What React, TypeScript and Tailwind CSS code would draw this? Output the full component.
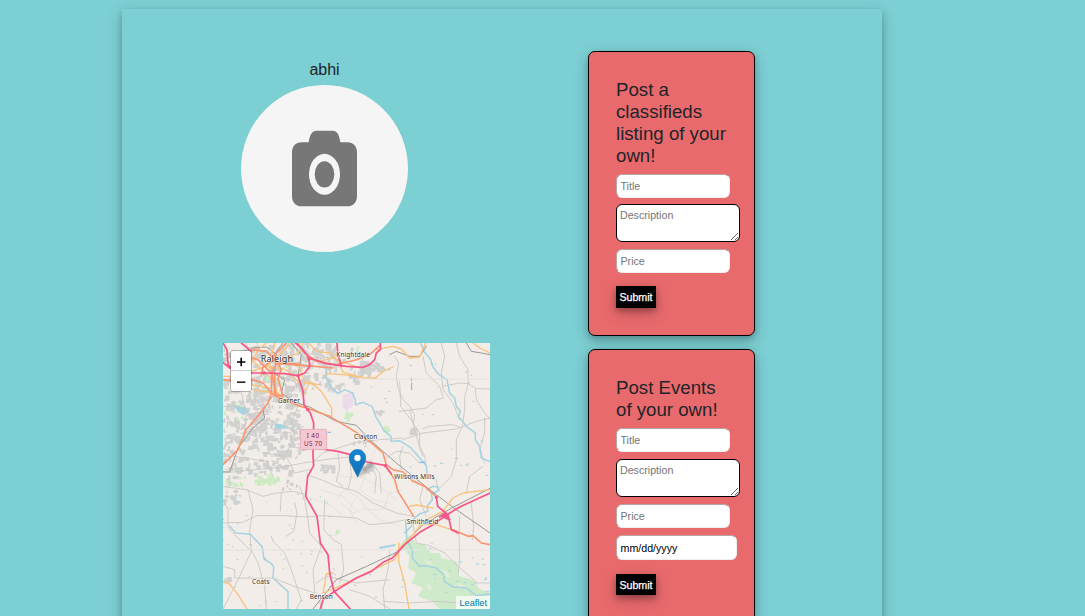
import React from "react";

// Map geometry is expressed in an 801x798 grid, three units per CSS pixel.

function seeded(seed: number) {
  let s = seed;
  return () => {
    s = (s * 16807) % 2147483647;
    return s / 2147483647;
  };
}

type Area = [x: number, y: number, w: number, h: number, count: number, size: number];

const urbanAreas: Area[] = [
  [0, 0, 110, 120, 50, 16],
  [85, 0, 170, 150, 120, 16],
  [230, 0, 110, 75, 50, 14],
  [230, 70, 85, 70, 20, 11],
  [0, 130, 130, 160, 110, 13],
  [85, 150, 145, 100, 75, 13],
  [75, 230, 165, 110, 85, 14],
  [0, 270, 80, 110, 50, 14],
  [90, 330, 110, 60, 32, 12],
  [0, 370, 45, 110, 20, 11],
  [165, 390, 60, 60, 10, 9],
  [290, 363, 45, 20, 18, 11],
  [415, 358, 30, 34, 14, 10],
  [410, 50, 62, 34, 32, 15],
  [375, 85, 30, 26, 12, 13],
  [340, 10, 80, 60, 10, 10],
  [455, 198, 18, 12, 9, 12],
  [560, 252, 18, 16, 9, 10],
  [380, 290, 60, 45, 10, 9],
  [5, 700, 15, 12, 8, 9],
  [310, 105, 45, 35, 14, 12],
];

function blobs(areas: Area[], seed: number) {
  const r = seeded(seed);
  let d = "";
  for (const [x, y, w, h, n, size] of areas) {
    for (let i = 0; i < n; i++) {
      const bx = x + r() * w;
      const by = y + r() * h;
      const bw = 4 + r() * size;
      const bh = 4 + r() * size;
      const k = (r() - 0.5) * 8;
      d += `M${bx.toFixed(0)} ${by.toFixed(0)}l${bw.toFixed(0)} ${k.toFixed(0)}l${(-k).toFixed(0)} ${bh.toFixed(0)}l${(-bw).toFixed(0)} ${(k / 2).toFixed(0)}z`;
    }
  }
  return d;
}

function dashes(areas: Area[], seed: number) {
  const r = seeded(seed);
  let d = "";
  for (const [x, y, w, h, n, size] of areas) {
    for (let i = 0; i < n; i++) {
      d += `M${(x + r() * w).toFixed(0)} ${(y + r() * h).toFixed(0)}h${(1 + r() * size).toFixed(0)}`;
    }
  }
  return d;
}

const urban = blobs(urbanAreas, 71);
const parks = blobs(
  [
    [90, 60, 240, 80, 14, 10],
    [0, 170, 70, 60, 8, 9],
    [0, 400, 70, 25, 12, 10],
    [95, 395, 65, 25, 28, 12],
    [365, 205, 16, 22, 12, 10],
    [480, 245, 18, 20, 6, 9],
    [395, 10, 30, 15, 3, 8],
    [335, 560, 10, 8, 3, 7],
  ],
  29,
);
const ponds = dashes(
  [
    [0, 450, 330, 340, 50, 2],
    [350, 60, 450, 340, 26, 4],
    [300, 640, 240, 150, 12, 4],
    [580, 600, 210, 150, 20, 7],
    [560, 340, 230, 70, 8, 10],
  ],
  17,
);

const minorRoads = [
  "M0 385L20 388L100 380L180 372L240 360L320 348L400 340",
  "M0 540L60 538L100 518L180 518L250 522L300 518L400 525L440 545L500 540L550 530",
  "M0 470L15 500L15 555L60 600L90 630L105 660L125 730L130 798",
  "M75 440L90 500L80 560L85 625L50 700L35 730L0 798",
  "M0 670L35 680L35 705L100 706L150 705L220 732L275 750",
  "M230 430L245 470L255 530L260 570L295 610L270 680L275 745L300 798",
  "M145 580L150 595L185 630L205 680L222 732L235 770L220 798",
  "M305 470L302 560L330 590L355 605L362 680L350 720",
  "M215 480L222 510L212 565L190 580",
  "M0 430L70 440L120 460L160 450L210 445L250 455",
  "M175 450L172 505M190 330L215 280L205 240L225 190",
  "M250 395L300 412L340 430L400 445L450 480L520 510L570 520",
  "M272 355L300 330L360 310L400 298L470 290L540 285",
  "M345 330L350 375L340 415L360 430",
  "M380 345L385 400L375 440M440 360L460 400L455 450",
  "M540 290L600 270L700 258L760 235L801 225",
  "M515 40L527 60L520 100L525 135L540 170L560 190L575 215L572 240",
  "M600 40L610 90L650 130L660 160M655 0L665 40L655 90L660 140L690 180L710 230",
  "M700 0L710 40L735 80L735 125L725 160L725 200L718 250L700 290L700 350L685 400L650 435",
  "M658 130L710 120L735 122L760 137L801 138M757 140L760 170L785 210L801 228",
  "M530 115L533 190L560 225L590 270L590 310L605 340L610 370",
  "M533 205L570 200L610 195L640 170L662 165",
  "M600 257L620 250L690 245L715 255",
  "M785 225L785 270L770 320L785 360M780 370L740 400L730 450",
  "M440 350L470 390L475 450M540 310L530 340L535 380",
  "M490 345L520 325L560 330L590 360",
  "M560 200L590 315L600 340",
  "M570 540L580 600L620 608L665 630L700 665L740 700L762 720L801 720",
  "M710 520L708 580L710 640L706 690",
  "M500 625L495 680L480 740L485 798",
  "M280 720L310 700L400 720L500 710",
  "M480 775L560 780L640 775L720 780M380 740L440 760L500 798",
  "M745 480L752 550L748 590",
  "M610 520L590 470L600 430L560 400M640 410L645 440",
  "M100 0L130 60L150 90L200 110L240 130M70 0L85 65M0 50L80 85M0 190L50 190L110 240M50 130L70 210L65 270",
  "M150 270L200 270L240 250M120 330L190 340L215 390L260 380M30 340L130 355L150 400",
];

const faintRoads = [
  "M340 470L365 440L410 465L430 500L480 500L500 450L540 440",
  "M370 350L430 390L410 440L450 470L500 480M250 460L330 490L360 520",
  "M350 475L390 510L430 495L470 530L530 550",
  "M355 400L420 405L470 430L520 470M400 540L380 500L395 470",
  "M430 380L450 345M290 440L360 460L400 500M460 320L440 340",
];

const rivers = [
  "M310 80L308 100L318 118L326 135L345 152L365 140L388 150L397 170V185L420 178L447 190L458 220L470 240L482 262L504 280V295L530 293L562 313L590 345L610 368L612 395",
  "M612 440L630 430L645 432L648 442L625 452L628 470L612 490L615 505L590 512L570 530L565 550L545 570",
  "M592 0L605 28L622 48L630 72L648 95L672 110L680 150L695 165L700 190L712 205L706 222L715 230L730 250L757 270L757 290L770 310L775 345L801 356",
  "M20 550L38 570L82 574L118 612L123 648L145 662L152 672L150 705L195 746V798",
  "M548 535L552 590L568 622L568 645L590 670L610 668L640 675L662 695L664 715L690 732L730 735L760 758L801 752",
];

const yellowRoads = [
  "M258 0L280 25L320 30L345 55L360 88L420 104L458 105L480 85L510 72",
  "M460 20L510 10L535 18L560 45L590 42L608 0",
  "M310 92L360 95L420 104",
  "M0 100L50 100L85 125L140 135",
  "M85 60L105 20L130 0M200 0L180 25L155 48M85 85L130 70L190 80L230 120",
  "M240 0L225 30L180 50M155 0L140 60L160 145L180 165",
  "M260 115L295 145L326 195V220M260 115L245 150M225 60L245 120L290 125",
  "M90 140L150 150L230 190L270 200M20 40L85 50L150 110",
  "M0 716L20 723L45 755L72 798",
  "M300 750L310 693L330 690M300 750L360 725L440 685L515 650L530 615L575 570L600 535L660 505L690 465L720 450L801 440",
  "M527 600L527 655L545 720L558 798",
  "M560 490L580 486L630 495M590 545L640 545L700 565",
  "M750 0L770 15L801 30M250 45L290 55L330 45L410 75",
];

const orangeRoads = [
  "M0 365L45 320L68 262L100 225L135 180L145 150L146 90L160 62L155 35L175 15L190 0",
  "M88 110L120 120L150 155L190 175L250 195L320 220L400 268L448 302L480 330L490 365L510 380L540 387L570 415L605 430L640 462",
  "M490 370L515 410L525 445L550 485L572 520",
  "M85 45L105 50L145 90L160 155L180 160L165 105L175 80L165 60M85 20L130 25L160 55L230 65M225 0L240 25L280 55L340 65L400 50L440 35L470 8",
  "M690 560L735 580L750 578L775 600L801 605",
  "M160 62L250 68L330 75M155 90V155M0 110L40 115L90 110M115 95L120 70L160 50",
];

const motorways = [
  "M218 0L240 20L258 45L260 70L245 90L225 98L185 92L120 90L60 90L20 75L0 58",
  "M225 98L240 145L243 185L262 210L272 240L270 340L272 368L254 400L248 460L282 520L292 600L315 635L320 690L333 745L382 798",
  "M258 45L310 62L370 70L420 73L440 65L455 50L460 30L472 20V0",
  "M342 0L344 30L355 70M0 0L12 20L15 65L30 80M55 0L85 25L65 60",
  "M295 318L345 325L380 334L432 357L485 367L505 392",
  "M292 798L300 770L330 748L400 705L445 685L480 658L508 645L545 605L590 568L630 545L665 520L710 492L801 450",
  "M640 462L644 490L675 515L685 560L705 570M650 522L665 512L680 530L655 520",
];

const railways = [
  "M270 798L340 710L420 675L520 628L600 545L690 493L801 436",
  "M210 175L260 192L340 235L400 247L440 290L520 360L620 440L690 493L801 570",
  "M0 387H20L45 315L90 255L125 225L120 200L148 160",
  "M730 0L745 25L775 30L801 35M500 35L520 25L560 40H590L610 10",
  "M150 90L185 110L175 150L210 175M85 15L130 12L155 30M180 0L160 25L155 90M205 0L235 35L225 100",
];

function Lines({ paths, className }: { paths: string[]; className: string }) {
  return (
    <g className={className}>
      {paths.map((d) => (
        <path key={d} d={d} />
      ))}
    </g>
  );
}

const places: { name: string; x: number; y: number; width: number; className: string }[] = [
  { name: "Raleigh", x: 113, y: 58, width: 97, className: "text-[27px]" },
  { name: "Knightdale", x: 340, y: 41, width: 101, className: "text-[19.5px]" },
  { name: "Garner", x: 165, y: 180, width: 66, className: "text-[19.5px]" },
  { name: "Clayton", x: 393, y: 288, width: 70, className: "text-[19.5px]" },
  { name: "Wilsons Mills", x: 514, y: 408, width: 121, className: "text-[19.5px]" },
  { name: "Smithfield", x: 551, y: 542, width: 95, className: "text-[19.5px]" },
  { name: "Coats", x: 87, y: 723, width: 53, className: "text-[19.5px]" },
  { name: "Benson", x: 260, y: 768, width: 69, className: "text-[19.5px]" },
];

function MapTiles() {
  return (
    <svg
      viewBox="0 0 801 798"
      className="block h-[266px] w-[267px] fill-none [stroke-linecap:round] [stroke-linejoin:round]"
    >
      <rect width="801" height="798" className="fill-[#f2ede8]" />
      <path d={urban} className="fill-[#d1d1d0]" />
      <path d={parks} className="fill-[#cdebc2]" />
      <path d="M360 155l35-8l-5 40l-20 18l-12-12z" className="fill-[#ecdcea]" />
      <path
        d="M545 590L560 575L578 600L605 605L625 630L650 630L655 645L700 655L710 700L750 710L770 738L801 750V798H650L625 775L585 760L600 735L565 720L580 690L555 675L560 640L545 620L520 625z"
        className="fill-[#cfeaca]"
      />
      <path d="M600 650l30 8l-10 12zM650 680l25 5l5 20l-20-8zM700 720l25 8l-15 10zM610 720l22 12l-15 14z" className="fill-[#e0ecd8]" />
      <path d="M28 185L50 192L65 190L80 208L60 217L45 205zM155 240L180 246L200 256L155 258zM468 612L520 602L515 610L470 618z" className="fill-[#a3d4e0]" />
      <Lines paths={faintRoads} className="stroke-[#dcdeda] stroke-[2]" />
      <Lines paths={minorRoads} className="stroke-[#c8c6c3] stroke-[2.6]" />
      <Lines paths={rivers} className="stroke-[#a6d3e1] stroke-[4.5]" />
      <path d={ponds} className="stroke-[#93cae6] stroke-[2.5]" />
      <path d="M565 105v8M566 120v20M315 268h8M590 358h15" className="stroke-[#6fb9e8] stroke-[3]" />
      <path d="M0 621H801M400 108H801" className="stroke-[#e2e1e0] stroke-[3]" />
      <Lines paths={railways} className="stroke-[#9b9893] stroke-[3]" />
      <Lines paths={yellowRoads} className="stroke-[#fac27b] stroke-[4]" />
      <Lines paths={orangeRoads} className="stroke-[#fb946f] stroke-[4.8]" />
      <Lines paths={motorways} className="stroke-[#f6578a] stroke-[5.2]" />
      <path
        d="M225 98h.1M258 48h.1M254 200h.1M487 368h.1M335 745h.1M663 518h.1M640 463h.1M123 90h.1"
        className="stroke-[#f6578a] stroke-[10]"
      />
      <rect x="232" y="259" width="79" height="61" rx="4" className="fill-[#f3c8d2] stroke-[#e0a0b0] stroke-[2]" />
      <g className="fill-[#8c1c4c] font-['Noto_Sans',sans-serif] text-[19px]">
        <text x="251" y="285" textLength="37">I 40</text>
        <text x="243" y="308" textLength="54">US 70</text>
      </g>
      <g className="fill-[#303030] stroke-white/60 stroke-[4] font-['Noto_Sans',sans-serif] [paint-order:stroke]">
        {places.map((p) => (
          <text key={p.name} x={p.x} y={p.y} textLength={p.width} className={p.className}>
            {p.name}
          </text>
        ))}
      </g>
      <defs>
        <linearGradient id="pin" x1="0" y1="0" x2="0" y2="1">
          <stop offset="0" stopColor="#1687d3" />
          <stop offset="1" stopColor="#126eb4" />
        </linearGradient>
      </defs>
      <path d="M404 401L421 372L440 358Q456 362 444 374L415 399z" className="fill-black/20 blur-[3px]" />
      <path
        d="M403.500 401L386 367Q379 357 379 344A24.500 24.500 0 0 1 428 344Q428 357 421 367z"
        fill="url(#pin)"
        className="stroke-[#1b6fae] stroke-[2]"
      />
      <circle cx="403.500" cy="345" r="9.500" className="fill-white" />
    </svg>
  );
}

function LocationMap() {
  return (
    <div className="relative h-[266px] w-[267px] overflow-hidden">
      <MapTiles />
      <div className="absolute left-[7px] top-[7px] flex w-[22px] flex-col rounded-[3px] border border-black/25 bg-clip-padding font-['Liberation_Sans',sans-serif] text-black">
        <button className="flex h-5 items-center justify-center rounded-t-[2px] border-b border-[#ccc] bg-white">
          <svg viewBox="0 0 20 20" className="size-5 stroke-black stroke-[1.6]">
            <path d="M6 11h8.400M10.200 6.800v8.400" />
          </svg>
        </button>
        <button className="flex h-5 items-center justify-center rounded-b-[2px] bg-white">
          <svg viewBox="0 0 20 20" className="size-5 stroke-[#222] stroke-[1.600]">
            <path d="M6 11.200h8.400" />
          </svg>
        </button>
      </div>
      <div className="absolute bottom-0 right-0 h-[13px] bg-white/70 px-[3px] font-['Liberation_Sans',sans-serif] text-[9.200px] leading-[14px] text-[#0078a8]">
        Leaflet
      </div>
    </div>
  );
}

function Avatar() {
  return (
    <div className="size-[167px] overflow-hidden rounded-full bg-[#f5f5f5]">
      <svg viewBox="33 105 501 501" className="block size-full">
        <path
          d="M214 277H236C239 255 246 242 260 242H308C322 242 328 255 331 277H353C370 277 381 290 381 307V438C381 456 370 469 353 469H214C197 469 186 456 186 438V307C186 290 197 277 214 277Z"
          className="fill-[#777]"
        />
        <ellipse cx="283.500" cy="373" rx="46.500" ry="61.500" className="fill-[#f5f5f5]" />
        <ellipse cx="283.500" cy="373" rx="29.500" ry="39.500" className="fill-[#777]" />
      </svg>
    </div>
  );
}

function Field({ placeholder }: { placeholder: string }) {
  return (
    <input
      placeholder={placeholder}
      className="block h-6 w-[114px] rounded-[6px] border border-[#b5a5a5] border-b-[#eee] border-r-[#eee] bg-white px-[3.500px] pb-px text-[10.670px] placeholder:text-[#757575]"
    />
  );
}

function Description({ className }: { className: string }) {
  return (
    <textarea
      placeholder="Description"
      className={`${className} block h-[38px] w-[124px] resize rounded-[6px] border border-black bg-white px-[3px] pt-[4px] text-[10.670px] leading-[13px] placeholder:text-[#757575]`}
    />
  );
}

function Submit({ className }: { className: string }) {
  return (
    <button
      className={`${className} block w-10 bg-black text-center text-[10.670px] text-white shadow-[0_3px_6px_rgba(0,0,0,0.25),0_5px_15px_rgba(0,0,0,0.22)] [-webkit-text-stroke:0.25px_white]`}
    >
      Submit
    </button>
  );
}

function PostCard({ title, children }: { title: React.ReactNode; children: React.ReactNode }) {
  return (
    <section className="w-[167px] rounded-[7px] border border-black bg-[#e96a6d] pb-[27px] pl-[27px] pt-[27px] shadow-[0_3px_6px_rgba(0,0,0,0.2),0_5px_15px_rgba(0,0,0,0.19)]">
      <h2 className="mb-[7px] text-[18.670px] leading-[22px] text-[#212529]">{title}</h2>
      {children}
    </section>
  );
}

export default function App() {
  return (
    <div className="h-[616px] overflow-hidden bg-[#7ccfd3] pl-[122px] pt-[9px] font-['Liberation_Sans',Arial,sans-serif] text-[#212529]">
      <main className="flex h-[800px] w-[760px] shadow-[0_3px_6px_rgba(0,0,0,0.2),0_5px_15px_rgba(0,0,0,0.19)]">
        <div className="w-[466px] pl-[101px]">
          <div className="flex h-[334px] w-[203px] flex-col items-center pt-[49px]">
            <p className="mb-[3px] text-base leading-6">abhi</p>
            <Avatar />
          </div>
          <LocationMap />
        </div>
        <div className="flex flex-col gap-[13px] pt-[42px]">
          <PostCard title={<>Post a<br />classifieds<br />listing of your<br />own!</>}>
            <Field placeholder="Title" />
            <Description className="mt-1.5" />
            <div className="mt-[7px]">
              <Field placeholder="Price" />
            </div>
            <Submit className="mt-[13px] h-[22px]" />
          </PostCard>
          <PostCard title={<>Post Events<br />of your own!</>}>
            <Field placeholder="Title" />
            <Description className="mt-[7px]" />
            <div className="mt-[7px]">
              <Field placeholder="Price" />
            </div>
            <div className="mt-[7px] flex h-[25px] w-[121px] items-center rounded-[6px] border border-[#b5a5a5] border-b-[#eee] border-r-[#eee] bg-white px-[3.500px] text-[10.670px] text-black">
              mm/dd/yyyy
            </div>
            <Submit className="mt-[14px] h-[21px]" />
          </PostCard>
        </div>
      </main>
    </div>
  );
}
